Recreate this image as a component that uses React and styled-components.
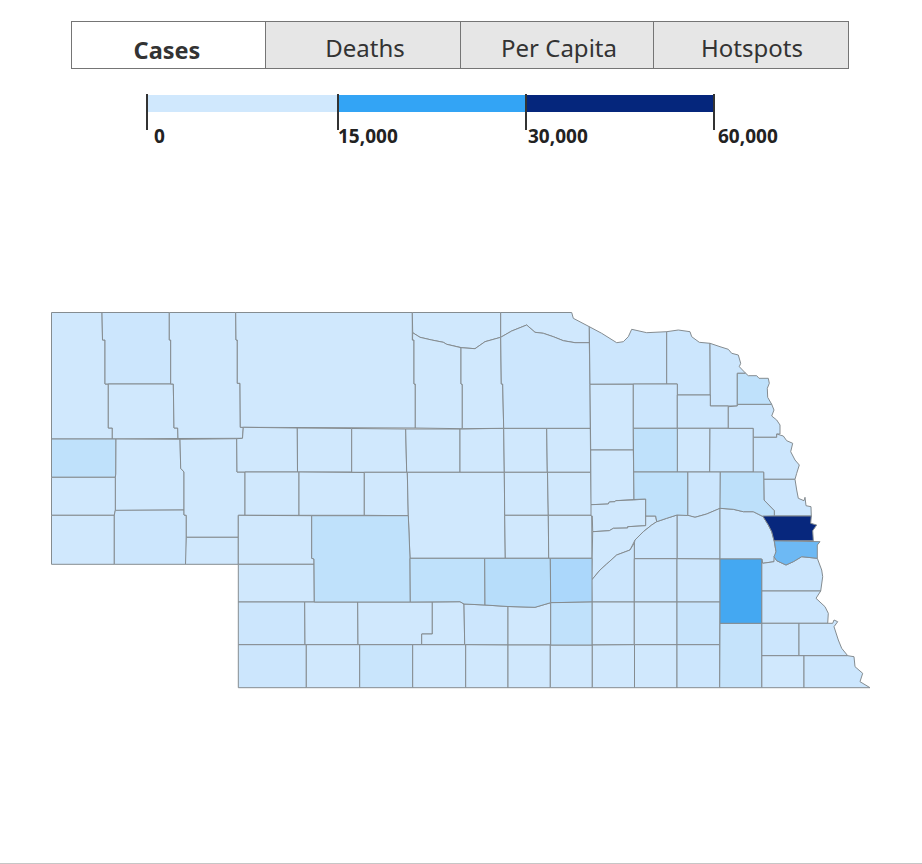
import React from 'react'
import styled, { createGlobalStyle } from 'styled-components'

const GlobalStyle = createGlobalStyle`
    html, body {
        margin: 0;
        padding: 0;
        background: #fff;
        overflow: hidden;
    }
    body {
        font-family: 'Noto Sans', 'Open Sans', sans-serif;
        color: #333;
    }
`

const Page = styled.div`
    box-sizing: border-box;
    height: 864px;
    padding-top: 21px;
    border-bottom: 1px solid #c6c6c6;
`
const TabBar = styled.div`
    box-sizing: border-box;
    display: grid;
    grid-template-columns: 193px 195px 193px 195px;
    width: 778px;
    height: 48px;
    margin-left: 71px;
    border: 1px solid #757575;
`
const Tab = styled.button`
    padding: ${(props) => (props.$active ? '11px 3px 0 0' : `6px 0 0 ${props.$shift}px`)};
    border: 0;
    border-left: ${(props) => (props.$active ? '0' : '1px solid #757575')};
    background: ${(props) => (props.$active ? '#fff' : '#e6e6e6')};
    color: #333;
    font-family: inherit;
    font-size: ${(props) => (props.$active ? '23.5px' : '24px')};
    font-weight: ${(props) => (props.$active ? 700 : 400)};
    line-height: 1;
`
const Legend = styled.div`
    display: grid;
    grid-template-columns: 191px 188px 188px 80px;
    margin: 25px 0 0 146px;
`
const Step = styled.div`
    box-sizing: border-box;
    height: 36px;
    padding-top: 1px;
    border-left: 2px solid #333;
`
const Swatch = styled.div`
    height: 17px;
    background: ${(props) => props.$color};
`
const StepLabel = styled.div`
    padding-left: ${(props) => props.$indent}px;
    margin-top: -5px;
    font-size: 19px;
    font-weight: 700;
    line-height: 22px;
    white-space: nowrap;
    color: #222;
`
const MapCanvas = styled.svg`
    display: block;
    width: 840px;
    height: 400px;
    margin: 153px 0 0 40px;
`
const County = styled.polygon`
    fill: ${(props) => props.$fill};
    stroke: #858c90;
    stroke-width: 1;
    stroke-linejoin: round;
`

const PALE = '#d0e8fd'
const SOFT = '#cce6fd'
const MID = '#bfe1fb'

const tabs = ['Cases', 'Deaths', 'Per Capita', 'Hotspots']
const tabShift = [0, 4, 4, 2]

const legendSteps = [
    { color: '#d0e8fd', label: '0', indent: 8 },
    { color: '#33a4f5', label: '15,000', indent: 1 },
    { color: '#05267c', label: '30,000', indent: 3 },
    { color: null, label: '60,000', indent: 5 },
]

const counties = [
    // panhandle
    [PALE, '51.5,312.5 102,312.5 102.5,340 105,340 105,384 108.3,384 108.3,428 112.3,428 112.3,439 51.5,439'],
    [SOFT, '102,312.5 169.3,312.5 169.3,340 170.7,340 170.7,384 105,384 105,340 102.5,340'],
    [PALE, '108.3,384 173.3,384 174,428 177.7,428 178,438.5 112.3,439 112.3,428 108.3,428'],
    [PALE, '169.3,312.5 235.7,312.5 236,340 237.3,340 237.3,383.3 240,383.3 240.3,427.3 243.3,427.3 242.5,438.3 178,438.5 177.7,428 174,428 173.3,384 170.7,384 170.7,340 169.3,340'],
    [MID, '51.5,439 116,439 115.8,474 115.3,477.3 51.5,477.3'],
    [PALE, '116,439 180,439.3 180.7,468.3 184,472 184,510 115.3,510.5 115.3,477.3 115.8,474'],
    [PALE, '51.5,477.3 115.3,477.3 115.3,510.5 114.3,515.3 51.5,515.3'],
    [PALE, '51.5,515.3 114.3,515.3 114.3,564.3 51.5,564.3'],
    [SOFT, '115.3,510.3 184,510 184,515 186.3,515.3 186.3,560 185.5,564.3 114.3,564.3 114.3,515'],
    [PALE, '180,439.3 236.7,438.7 237,472 245,472 245,515.3 238.3,515.3 238.3,537.3 186.3,537.3 186.3,515.3 184,515 184,472 180.7,468.3'],
    [PALE, '186.3,537.3 238.3,537.3 238.3,564.3 185.5,564.3'],
    // sandhills
    [PALE, '235.7,312.5 412.3,312.5 412.3,340 414,340 414,384 415.3,384 415.3,428 240.3,427.3 240,383.3 237.3,383.3 237.3,340 236,340'],
    [PALE, '243.3,427.3 297.3,428 297.5,472 237,472 236.7,438.7 242.5,438.3'],
    [PALE, '297.3,428 351.7,428.5 351.7,472 297.5,472'],
    [PALE, '351.7,428.5 405.7,429 406.7,472.3 351.7,472.3'],
    [PALE, '405.7,429 460,429 460,472.3 406.7,472.3'],
    [PALE, '460,429 503.7,428.3 504.3,472.3 460,472.3'],
    [PALE, '503.7,428.3 546.7,428.3 547.3,472.3 504.3,472.3'],
    [PALE, '546.7,428.3 590.3,428.3 590.7,472.3 547.3,472.3'],
    [PALE, '245,472 299,472 299,515.3 245,515.3'],
    [PALE, '299,472 364.3,472.5 364.3,515.3 299,515.3'],
    [PALE, '364.3,472.3 407.3,472.3 408.3,515.7 364.3,515.3'],
    [PALE, '407.3,472.3 504.3,472.3 504.7,515.3 505.3,558.3 410,558.3 408.3,515.7'],
    [PALE, '504.3,472.3 547.5,472.3 548.3,515.3 504.7,515.3'],
    [PALE, '547.5,472.3 590.7,472.3 591.7,515.3 548.3,515.3'],
    [PALE, '504.7,515.3 548.3,515.3 548.7,558.3 505.3,558.3'],
    [PALE, '548.3,515.3 591.7,515.3 592,558.3 548.7,558.3'],
    [PALE, '238.3,515.3 311.7,515.7 311.7,558.3 314,559 314,564.3 238.3,564.3'],
    [PALE, '238.3,564.3 314,564.3 314.3,602 238.3,602'],
    // north band
    [PALE, '412.3,312.5 500.7,312.5 500.7,337.3 485,341.7 475,348.7 461.7,347.7 446.7,344.3 443.3,342.3 431.7,340 420,337.3 412.7,332.7'],
    [PALE, '500.7,312.5 571.7,312.5 573.3,318.3 589.3,326.7 589.3,342.7 575,342.7 563.3,340.7 553.3,336.7 543.3,333.3 535,332.3 526.7,325 511.7,331 500.7,337.3'],
    [PALE, '412.7,332.7 420,337.3 431.7,340 443.3,342.3 446.7,344.3 461,347.7 461,384 462.3,384.3 462.3,428.7 415.3,428 415.3,384 414,384 414,340 412.5,340'],
    [PALE, '461,347.7 475,348.7 485,341.7 500.7,337.3 501.3,384 502.7,384 503.7,428.3 462.3,428.7 462.3,384.3 461,384'],
    [SOFT, '500.7,337.3 511.7,331 526.7,325 535,332.3 543.3,333.3 553.3,336.7 563.3,340.7 575,342.7 589.3,342.7 590,384.3 590.3,428.3 503.7,428.3 502.7,384 501.3,384'],
    [SOFT, '589.3,326.7 601.7,333.3 616.7,342.7 623.3,341.7 628.3,336.7 631.7,329.3 646.7,332.7 666.7,331.7 666.7,384 590,384.3'],
    [PALE, '590,384.3 633.3,384.3 633.3,450 590.7,450'],
    [PALE, '590.7,450 633.3,450 633.7,472 634,499.5 615.7,500.7 615,501.7 609.3,502 608.3,504 591,504.7'],
    [PALE, '591,504.7 608.3,504 609.3,502 615,501.7 615.7,500.7 633.3,500 645.7,499 645.7,525.7 627.7,526.7 627.7,528 613.3,528.3 609.3,530.7 592.7,531.7 592.3,516 591,516'],
    [PALE, '592.7,531.7 609.3,530.7 613.3,528.3 627.7,528 627.7,526.7 645.7,525.7 645.7,516 655.7,516 656.7,521.7 651.7,525 643.3,531.7 635,540 630,550 616.7,555 606.7,564 600,570 591.7,580'],
    [SOFT, '666.7,331.7 678.3,330 690,331.7 691.7,336.7 699.3,342.3 710,343.3 710.3,395 677.3,395 677.3,384 666.7,384'],
    [SOFT, '710,343.3 720,346.7 728.3,349.3 731.7,353.3 738.3,355 740.7,363.3 739.3,366.7 745.7,373.3 737.3,373.3 737.3,406 710.3,406'],
    [SOFT, '633.3,384 677.3,384 677.3,428.3 633.3,428.3'],
    [SOFT, '677.3,395 710.3,395 710.3,406 728.3,406 728.3,428.3 677.3,428.3'],
    [PALE, '677.3,428.3 710,428.3 709.7,472 677.3,472'],
    [SOFT, '710,428.3 753.3,428.3 753.3,472 709.7,472'],
    [SOFT, '728.3,406.7 737.3,406 737.3,404.3 771.7,404.3 774,410 771.7,416 776.7,420 780,425 780,434 776.7,434 776.7,437.3 753.3,437.3 753.3,428.3 728.3,428.3'],
    [SOFT, '753.3,437.3 776.7,437.3 776.7,434 783.3,436 786.7,440.7 792.7,443.3 790.7,451.7 795,460 799.3,465 796.7,473.3 795,479.3 763.7,479.3 763.7,472.3 753.3,472.3'],
    [SOFT, '763.7,479.3 795,479.3 796.7,490 798.3,498.3 804,500.7 805,497.3 806,505.7 811,506.7 811.3,516 774.3,516 774.3,510.7 764,500'],
    // platte valley
    [SOFT, '687.7,472 720.3,472 720.3,508.3 706.7,514 695,517.3 687.7,515.5'],
    [SOFT, '677,515 686.7,515 695,517.3 706.7,514 720,508.3 720,559 677,558.7'],
    [SOFT, '634.3,543 635,540 643.3,531.7 651.7,525 656.7,521.7 666.7,518.3 677,515 677,558.7 634.3,558.7'],
    [SOFT, '591.7,580 600,570 606.7,564 616.7,555 630,550 634.3,543 634.3,602 592,602'],
    [SOFT, '634.3,558.7 677,558.7 677,602 634.3,602'],
    [SOFT, '677,558.7 720,559 720,602 677,602'],
    [SOFT, '720,508.3 733.3,509.3 743.3,511.7 753.3,511.7 763.3,516.7 768.3,525 771.7,531.7 774,540 776,551.7 774,561.7 762.7,563.3 761.7,559 720,559'],
    [SOFT, '762.7,563.3 774,561.7 774,556.7 776.7,560.7 786,565 793.3,561.7 801.7,556.7 817.3,558.3 821.7,570 822.7,576.7 820.7,591 761.7,591 761.7,559'],
    [SOFT, '761.7,591 820.7,591 816,598.3 825,606.7 828.3,613.3 827.7,623.3 761.7,623.3'],
    [SOFT, '761.7,623.3 799,623.3 799,655.7 761.7,655.7'],
    [SOFT, '799,623.3 832.7,623.3 834,620 837.7,621.7 834,626.7 838.3,640 841.7,648.3 847.7,655.7 799,655.7'],
    [PALE, '761.7,655.7 804,655.7 804,687.7 761.7,687.7'],
    [SOFT, '804,655.7 847.7,655.7 854,656.7 855,666.7 862.7,673.3 860,681.7 870,687.7 804,687.7'],
    // south rows
    [SOFT, '238.3,602 304.7,602 305,644.7 238.3,644.7'],
    [PALE, '304.7,602 357.7,602 358,644.7 305,644.7'],
    [PALE, '357.7,602 432.3,602 432.3,634 421.7,634 421.7,644.7 358,644.7'],
    [PALE, '432.3,602 460,601.7 464,604 464.7,644.7 421.7,644.7 421.7,634 432.3,634'],
    [SOFT, '464,604 485,605 508,606.5 508,645 464.7,644.7'],
    [PALE, '508,606.5 535,607.3 550.7,602.7 550.7,645 508,645'],
    [PALE, '592,602 634.3,602 634.3,644.7 592,645'],
    [PALE, '634.3,602 677,602 677,644.7 634.3,644.7'],
    ['#c8e4fc', '677,602 720,602 719.7,644.7 677,644.7'],
    [SOFT, '238.3,644.7 306.3,644.7 306.3,687.7 238.3,687.7'],
    [PALE, '306.3,644.7 359.7,644.7 359.7,687.7 306.3,687.7'],
    ['#c9e5fc', '359.7,644.7 412.7,644.7 412.7,687.7 359.7,687.7'],
    [PALE, '412.7,644.7 465.7,644.7 465.7,687.7 412.7,687.7'],
    [PALE, '465.7,644.7 508,645 508,687.7 465.7,687.7'],
    [PALE, '508,645 550.3,645 550.3,687.7 508,687.7'],
    [PALE, '550.3,645 592.3,645 592.3,687.7 550.3,687.7'],
    [PALE, '592.3,645 634.5,644.7 634.5,687.7 592.3,687.7'],
    [PALE, '634.5,644.7 677,644.7 677,687.7 634.5,687.7'],
    [SOFT, '677,644.7 719.7,644.7 719.7,687.7 677,687.7'],
    // shaded by count
    ['#c5e3fb', '720,623.3 761.7,623.3 761.7,687.7 719.7,687.7'],
    [MID, '737.3,373.3 745.7,373.3 748.3,375.7 756.7,375.7 759,378.3 768.3,378.3 769.3,383.3 767.3,388.3 767.7,397.3 771.7,404.3 737.3,404.3'],
    [MID, '633.3,428.3 677.3,428.3 677.3,472 633.7,472'],
    [MID, '633.7,472 687.7,472 687.7,515.5 677,515 666.7,518.3 656.7,521.7 655.7,516 645.7,516 645.7,499 634,499.5'],
    ['#bde0fa', '720.3,472 763.7,472 764,500 774.3,510.7 774.3,516 763.3,516.7 753.3,511.7 743.3,511.7 733.3,509.3 720,508.3'],
    [MID, '311.7,515.7 408.3,515.7 410,558.3 410.3,602 314.3,602 314,559 311.7,558.3'],
    [MID, '410,558.3 484.7,558.3 485,605 464,604 460,601.7 410.3,602'],
    ['#b7ddfa', '484.7,558.3 550.3,558.3 550.7,602.7 535,607.3 508,606.5 485,605'],
    ['#abd7fb', '550.3,558.3 592,558.3 592,602 550.7,602.7'],
    ['#c0e1fb', '550.7,602.7 592,602 592,645 550.7,645'],
    ['#6db9f4', '774.3,540.7 820,541.7 817.3,545 817.3,558.3 801.7,556.7 793.3,561.7 786,565 776.7,560.7 774,556.7 776,551.7'],
    ['#44a8f2', '720,559 761.7,559 761.7,623.3 720,623.3'],
    ['#07277d', '762.7,516 811.3,516 810.7,523.3 816.7,525 812.7,530.7 813.3,540.7 774,540.7 771.7,531.7 768.3,525'],
]

const App = () => (
    <Page>
        <GlobalStyle />
        <TabBar>
            {tabs.map((name, i) => (
                <Tab key={name} $active={i === 0} $shift={tabShift[i]}>
                    {name}
                </Tab>
            ))}
        </TabBar>
        <Legend>
            {legendSteps.map((step) => (
                <Step key={step.label}>{step.color && <Swatch $color={step.color} />}</Step>
            ))}
            {legendSteps.map((step) => (
                <StepLabel key={step.label} $indent={step.indent}>
                    {step.label}
                </StepLabel>
            ))}
        </Legend>
        <MapCanvas viewBox="40 300 840 400">
            {counties.map(([fill, points]) => (
                <County key={points} $fill={fill} points={points} />
            ))}
        </MapCanvas>
    </Page>
)

export default App
